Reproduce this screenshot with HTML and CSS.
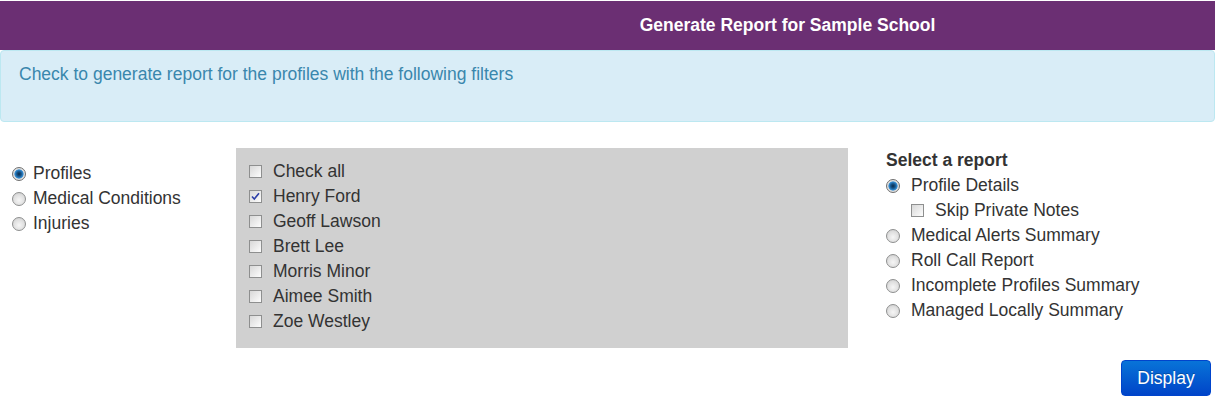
FILE: index.html
```html
<!DOCTYPE html>
<html>
<head>
<meta charset="utf-8">
<link rel="stylesheet" href="styles.css">
</head>
<body>
<div class="header"><h1 class="title">Generate Report for Sample School</h1></div>
<div class="info">Check to generate report for the profiles with the following filters</div>
<div class="main">
  <div class="filters">
    <label class="row"><input type="radio" class="radio" name="f" checked><span>Profiles</span></label>
    <label class="row"><input type="radio" class="radio" name="f"><span>Medical Conditions</span></label>
    <label class="row"><input type="radio" class="radio" name="f"><span>Injuries</span></label>
  </div>
  <div class="people">
    <label class="row"><input type="checkbox" class="check"><span>Check all</span></label>
    <label class="row"><input type="checkbox" class="check" checked><span>Henry Ford</span></label>
    <label class="row"><input type="checkbox" class="check"><span>Geoff Lawson</span></label>
    <label class="row"><input type="checkbox" class="check"><span>Brett Lee</span></label>
    <label class="row"><input type="checkbox" class="check"><span>Morris Minor</span></label>
    <label class="row"><input type="checkbox" class="check"><span>Aimee Smith</span></label>
    <label class="row"><input type="checkbox" class="check"><span>Zoe Westley</span></label>
  </div>
  <div class="reports">
    <div class="heading">Select a report</div>
    <label class="row"><input type="radio" class="radio" name="r" checked><span>Profile Details</span></label>
    <label class="row sub"><input type="checkbox" class="check"><span>Skip Private Notes</span></label>
    <label class="row"><input type="radio" class="radio" name="r"><span>Medical Alerts Summary</span></label>
    <label class="row"><input type="radio" class="radio" name="r"><span>Roll Call Report</span></label>
    <label class="row"><input type="radio" class="radio" name="r"><span>Incomplete Profiles Summary</span></label>
    <label class="row"><input type="radio" class="radio" name="r"><span>Managed Locally Summary</span></label>
  </div>
</div>
<div class="actions"><button class="btn">Display</button></div>
</body>
</html>
```
FILE: styles.css
```css
* { box-sizing: border-box; }
body {
  margin: 0;
  font-family: "Liberation Sans", Arial, sans-serif;
  font-size: 17.5px;
  color: #333;
  background: #fff;
}
.header {
  background: #6b2f73;
  height: 50px;
  border-top: 1px solid #fff;
  padding-left: 360px;
  display: flex;
  align-items: center;
  justify-content: center;
}
.title {
  margin: 0;
  color: #fff;
  font-size: 17.5px;
  font-weight: bold;
}
.info {
  background: #d9edf7;
  border: 1px solid #bce8f1;
  border-radius: 4px;
  color: #3a87ad;
  height: 72px;
  padding: 13px 18px;
  line-height: 20px;
}
.main {
  display: flex;
  margin-top: 26px;
}
.filters {
  width: 236px;
  padding: 13px 0 0 12px;
}
.people {
  width: 612px;
  height: 200px;
  background: #d0d0d0;
  padding: 11px 0 0 13px;
}
.reports {
  padding-left: 38px;
}
.heading {
  font-weight: bold;
  line-height: 25px;
}
.row {
  display: flex;
  align-items: center;
  height: 25px;
  line-height: 25px;
}
.row.sub { padding-left: 25px; }
.radio, .check {
  appearance: none;
  -webkit-appearance: none;
  margin: 0;
  width: 13px;
  height: 13px;
  flex: none;
  border: 1px solid #8e8f8f;
}
.radio {
  width: 14px;
  height: 14px;
  border-radius: 50%;
  margin-right: 7px;
  background: radial-gradient(circle at 50% 60%, #f6f6f6 0, #e0e0e0 55%, #c8c8c8 100%);
}
.reports .radio { margin-right: 11px; }
.radio:checked {
  border-color: #6f6f6f;
  background: radial-gradient(circle at 50% 50%, #0b2a48 0, #17578e 28%, #3790d6 50%, #dcdcdc 58%, #f2f2f2 100%);
}
.check {
  margin-right: 11px;
  background: linear-gradient(135deg, #d8d8d8 0%, #ececec 55%, #fdfdfd 100%);
}
.check:checked {
  background-color: #f0f0f0;
  background-image:
    url("data:image/svg+xml;utf8,<svg xmlns='http://www.w3.org/2000/svg' width='11' height='11'><path d='M2 5.5 L4.3 8 L9 2.2' fill='none' stroke='%232d3fa8' stroke-width='1.6'/></svg>"),
    linear-gradient(135deg, #d8d8d8 0%, #ececec 55%, #fdfdfd 100%);
  background-repeat: no-repeat;
  background-position: center;
}
.actions {
  display: flex;
  justify-content: flex-end;
  padding: 12px 4px 0 0;
}
.btn {
  width: 90px;
  height: 36px;
  border: 1px solid #0044cc;
  border-radius: 4px;
  background: linear-gradient(#0874d8, #0044c8);
  color: #fff;
  font-family: "Liberation Sans", Arial, sans-serif;
  font-size: 17.5px;
  text-shadow: 0 -1px 0 rgba(0,0,0,0.25);
}
```
